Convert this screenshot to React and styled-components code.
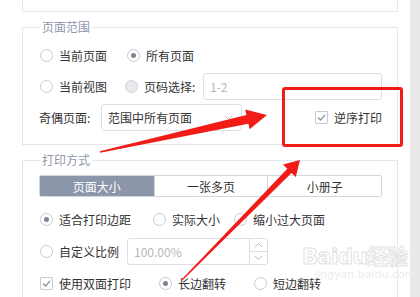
import styled, { createGlobalStyle } from "styled-components";

const GlobalStyle = createGlobalStyle`
  html, body {
    margin: 0;
    padding: 0;
    background: #fff;
  }
  body {
    font-family: "Noto Sans CJK SC", "Noto Sans", sans-serif;
    font-size: 12px;
    color: #333;
  }
`;

const Page = styled.div`
  position: relative;
  display: flex;
  width: 420px;
  height: 297px;
  overflow: hidden;
`;

const Main = styled.div`
  width: 376px;
  padding: 0 12px 0 22px;
`;

const SideStrip = styled.div`
  flex: 1;
  background: #e9e9eb;
`;

const TopCard = styled.div`
  height: 11px;
  border: 1px solid #e4e7ed;
  border-top: none;
`;

const Section = styled.fieldset`
  margin: 7px 0 0;
  min-width: 0;
  border: 1px solid #e4e7ed;
  padding: 7px 15px 13px 17px;
  display: flex;
  flex-direction: column;
  gap: ${(p) => p.$gap || 4}px;
`;

const Legend = styled.legend`
  padding: 0 2px;
  font-size: 12px;
  line-height: 16px;
  color: #8e97a9;
`;

const Row = styled.div`
  display: flex;
  align-items: center;
  height: 27px;
  margin-top: ${(p) => p.$top || 0}px;
`;

const Option = styled.label`
  display: flex;
  align-items: center;
  gap: 6px;
  width: ${(p) => (p.$w ? `${p.$w}px` : "auto")};
  margin-left: ${(p) => (p.$push ? "auto" : "0")};
  line-height: 16px;
  white-space: nowrap;
`;

const RadioDot = styled.span`
  box-sizing: border-box;
  width: 13px;
  height: 13px;
  border-radius: 50%;
  border: 1px solid ${(p) => (p.$disabled ? "#cdd1d8" : "#c6cad2")};
  background: ${(p) => (p.$disabled ? "#e7e9ed" : "#fff")};
  display: flex;
  align-items: center;
  justify-content: center;
  &::after {
    content: "";
    width: 5px;
    height: 5px;
    border-radius: 50%;
    background: #7d8495;
    display: ${(p) => (p.$checked ? "block" : "none")};
  }
`;

const CheckBox = styled.span`
  box-sizing: border-box;
  width: 13px;
  height: 13px;
  border: 1px solid #c6cad2;
  border-radius: 1px;
  background: #fff;
  display: flex;
  align-items: center;
  justify-content: center;
`;

const FieldLabel = styled.span`
  width: 61px;
  margin-left: -1px;
  margin-right: 1px;
  white-space: nowrap;
`;

const TextBox = styled.div`
  box-sizing: border-box;
  position: relative;
  width: ${(p) => p.$w}px;
  height: 27px;
  margin-left: ${(p) => (p.$push ? "auto" : "0")};
  border: 1px solid #dcdfe6;
  border-radius: 3px;
  padding: 0 6px;
  display: flex;
  align-items: center;
  color: ${(p) => (p.$placeholder ? "#b4b7bd" : "#333")};
  background: #fff;
`;

const Chevron = styled.span`
  margin-left: auto;
  margin-right: 2px;
  display: flex;
  color: #b9bdc5;
`;

const Spinner = styled.div`
  margin-left: auto;
  margin-right: -6px;
  width: 17px;
  height: 25px;
  border-left: 1px solid #dcdfe6;
  display: flex;
  flex-direction: column;
`;

const SpinHalf = styled.span`
  flex: 1;
  display: flex;
  align-items: center;
  justify-content: center;
  color: #b9bdc5;
  border-top: ${(p) => (p.$lower ? "1px solid #dcdfe6" : "none")};
`;

const Tabs = styled.div`
  display: grid;
  grid-template-columns: repeat(3, 1fr);
  margin-left: -1px;
  height: 20px;
  border: 1px solid #d3d6dc;
  border-radius: 2px;
  overflow: hidden;
`;

const Tab = styled.div`
  display: flex;
  align-items: center;
  justify-content: center;
  background: ${(p) => (p.$active ? "#8c96aa" : "#fff")};
  color: ${(p) => (p.$active ? "#fff" : "#333")};
  border-left: ${(p) => (p.$first ? "none" : "1px solid #d3d6dc")};
`;

const HighlightBox = styled.div`
  position: absolute;
  left: 282px;
  top: 87px;
  width: 115px;
  height: 54px;
  border: 3px solid #f21c17;
  border-radius: 3px;
  pointer-events: none;
`;

const Overlay = styled.svg`
  position: absolute;
  left: 0;
  top: 0;
  pointer-events: none;
`;

const Watermark = styled.div`
  position: absolute;
  left: 302px;
  top: 244px;
  pointer-events: none;
  font-family: "DejaVu Sans", "Noto Sans CJK SC", sans-serif;
  color: rgba(255, 255, 255, 0.6);
  -webkit-text-stroke: 1px #e2e2e4;
`;

const MarkTitle = styled.div`
  font-size: 21px;
  font-weight: bold;
  line-height: 26px;
  letter-spacing: -0.5px;
`;

const MarkUrl = styled.div`
  margin: -2px 0 0 12px;
  font-size: 11px;
  line-height: 13px;
  -webkit-text-stroke: 0;
  color: #ececee;
`;

const Tick = () => (
  <svg width="9" height="9" viewBox="0 0 9 9">
    <path d="M1 4.6 L3.6 7 L8 1.8" fill="none" stroke="#8a91a0" strokeWidth="1.3" />
  </svg>
);

const Radio = ({ w, checked, disabled, children }) => (
  <Option $w={w}>
    <RadioDot $checked={checked} $disabled={disabled} />
    {children}
  </Option>
);

const Check = ({ w, push, children }) => (
  <Option $w={w} $push={push}>
    <CheckBox>
      <Tick />
    </CheckBox>
    {children}
  </Option>
);

const SmallChevron = ({ up }) => (
  <svg width="9" height="6" viewBox="0 0 9 6">
    <path
      d={up ? "M1 5 L4.5 1.5 L8 5" : "M1 1 L4.5 4.5 L8 1"}
      fill="none"
      stroke="currentColor"
      strokeWidth="1"
    />
  </svg>
);

export default function App() {
  return (
    <>
      <GlobalStyle />
      <Page>
        <Main>
          <TopCard />

          <Section>
            <Legend>页面范围</Legend>
            <Row>
              <Radio w={87}>当前页面</Radio>
              <Radio checked>所有页面</Radio>
            </Row>
            <Row>
              <Radio w={85}>当前视图</Radio>
              <Radio disabled>页码选择:</Radio>
              <TextBox $w={179} $push $placeholder>
                1-2
              </TextBox>
            </Row>
            <Row>
              <FieldLabel>奇偶页面:</FieldLabel>
              <TextBox $w={141}>
                范围中所有页面
                <Chevron>
                  <SmallChevron />
                </Chevron>
              </TextBox>
              <Check push>逆序打印</Check>
            </Row>
          </Section>

          <Section $gap={5}>
            <Legend>打印方式</Legend>
            <Tabs>
              <Tab $active $first>
                页面大小
              </Tab>
              <Tab>一张多页</Tab>
              <Tab>小册子</Tab>
            </Tabs>
            <Row $top={4}>
              <Radio w={113} checked>
                适合打印边距
              </Radio>
              <Radio w={81}>实际大小</Radio>
              <Radio>缩小过大页面</Radio>
            </Row>
            <Row>
              <Radio w={87}>自定义比例</Radio>
              <TextBox $w={141} $placeholder>
                100.00%
                <Spinner>
                  <SpinHalf>
                    <SmallChevron up />
                  </SpinHalf>
                  <SpinHalf $lower>
                    <SmallChevron />
                  </SpinHalf>
                </Spinner>
              </TextBox>
            </Row>
            <Row>
              <Check w={119}>使用双面打印</Check>
              <Radio w={95} checked>
                长边翻转
              </Radio>
              <Radio>短边翻转</Radio>
            </Row>
          </Section>
        </Main>
        <SideStrip />

        <Watermark>
          <MarkTitle>Baidu经验</MarkTitle>
          <MarkUrl>jingyan.baidu.com</MarkUrl>
        </Watermark>

        <HighlightBox />

        <Overlay width="420" height="297" viewBox="0 0 420 297">
          <polygon
            fill="#f21c17"
            points="99.8,151.2 246.4,115.0 245.2,109.6 267,115 249.6,129.2 248.4,123.8 100.2,152.8"
          />
          <polygon
            fill="#f21c17"
            points="181.6,279.6 287.3,168.7 283.0,164.5 300,160 295.8,177.1 291.5,172.9 182.4,280.4"
          />
        </Overlay>
      </Page>
    </>
  );
}
